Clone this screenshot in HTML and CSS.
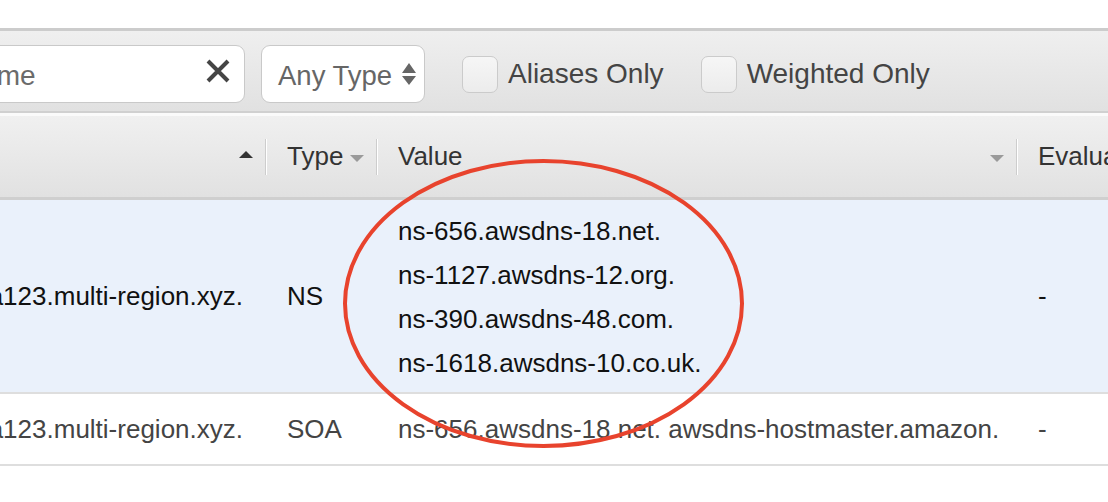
FILE: index.html
```html
<!DOCTYPE html>
<html lang="en">
<head>
<meta charset="utf-8">
<title>Record Sets</title>
<link rel="stylesheet" href="styles.css">
</head>
<body>
<div class="viewport">
  <div class="page">
    <div class="topbar"></div>
    <div class="toolbar">
      <div class="search">
        <span class="ph">Record Set Name</span>
        <svg class="clear" viewBox="0 0 28 28" aria-hidden="true"><path d="M4 4 L24 24 M24 4 L4 24" stroke="#454545" stroke-width="4" fill="none"/></svg>
      </div>
      <div class="select">
        <span>Any Type</span>
        <svg class="updown" viewBox="0 0 14 24" aria-hidden="true"><path d="M0 11 L7 1 L14 11 Z M0 14 L14 14 L7 23 Z" fill="#666"/></svg>
      </div>
      <label class="check"><span class="box"></span><span>Aliases Only</span></label>
      <label class="check"><span class="box"></span><span>Weighted Only</span></label>
    </div>
    <div class="table">
      <div class="thead">
        <div class="th"><div class="th-in first"><span>Name</span><i class="caret up"></i></div></div>
        <div class="th"><div class="th-in"><span>Type</span><i class="caret down"></i></div></div>
        <div class="th"><div class="th-in"><span>Value</span><i class="caret down"></i></div></div>
        <div class="th"><div class="th-in"><span>Evaluate Target Health</span></div></div>
      </div>
      <div class="row sel">
        <div class="cell name">a123.multi-region.xyz.</div>
        <div class="cell">NS</div>
        <div class="cell value">
          <div>ns-656.awsdns-18.net.</div>
          <div>ns-1127.awsdns-12.org.</div>
          <div>ns-390.awsdns-48.com.</div>
          <div>ns-1618.awsdns-10.co.uk.</div>
        </div>
        <div class="cell">-</div>
      </div>
      <div class="row">
        <div class="cell name">a123.multi-region.xyz.</div>
        <div class="cell">SOA</div>
        <div class="cell">ns-656.awsdns-18.net. awsdns-hostmaster.amazon.</div>
        <div class="cell">-</div>
      </div>
    </div>
  </div>
  <svg class="circle" viewBox="0 0 410 298" aria-hidden="true"><ellipse cx="204.5" cy="148.5" rx="198.5" ry="142.5" fill="none" stroke="#e8432d" stroke-width="4"/></svg>
</div>
</body>
</html>
```

FILE: styles.css
```css
html, body {
  margin: 0;
  padding: 0;
  background: #fff;
}

body {
  font-family: "Liberation Sans", Arial, Helvetica, sans-serif;
  overflow: hidden;
}

.viewport {
  position: relative;
  width: 1108px;
  height: 502px;
  overflow: hidden;
}

.page {
  margin-left: -216px;
  width: 1324px;
}

.topbar {
  height: 28px;
  border-bottom: 3px solid #cccccc;
}

.toolbar {
  display: flex;
  align-items: center;
  padding: 14px 0 8px 14px;
  background: linear-gradient(#efefef, #e1e1e1);
  border-bottom: 2px solid #d0d0d0;
}

.search {
  box-sizing: border-box;
  width: 447px;
  height: 58px;
  display: flex;
  align-items: center;
  padding: 3px 12px 0 14px;
  background: #fff;
  border: 1px solid #c9c9c9;
  border-radius: 9px;
  font-size: 28px;
  color: #6b6b6b;
}

.search .ph {
  flex: 1;
  white-space: nowrap;
}

.clear {
  width: 28px;
  height: 28px;
  align-self: flex-start;
  margin-top: 8px;
}

.select {
  box-sizing: border-box;
  margin-left: 16px;
  width: 164px;
  height: 58px;
  display: flex;
  align-items: center;
  justify-content: space-between;
  padding: 3px 8px 0 16px;
  background: #fff;
  border: 1px solid #c9c9c9;
  border-radius: 9px;
  font-size: 27.5px;
  color: #666;
}

.updown {
  width: 14px;
  height: 24px;
  margin-top: -3px;
}

.check {
  display: flex;
  align-items: center;
  gap: 10px;
  margin-left: 37px;
  font-size: 28px;
  color: #444;
}

.check .box {
  box-sizing: border-box;
  width: 36px;
  height: 37px;
  border: 1px solid #cbcbcb;
  border-radius: 7px;
  background: linear-gradient(#f6f6f6, #ececec);
}

.thead,
.row {
  display: grid;
  grid-template-columns: 481px 111px 640px 1fr;
}

.thead {
  height: 81px;
  border-top: 3px solid #fafafa;
  border-bottom: 3px solid #cfcfcf;
  background: linear-gradient(#f0f0f0, #e1e1e1);
}

.th {
  display: flex;
  align-items: center;
  min-width: 0;
}

.th-in {
  flex: 1;
  height: 36px;
  display: flex;
  align-items: center;
  justify-content: space-between;
  padding: 0 12px 0 21px;
  border-left: 1px solid #cdcdcd;
  box-shadow: inset 1px 0 0 #ffffff;
  font-size: 26px;
  color: #333;
  white-space: nowrap;
}

.th-in.first {
  border-left: 0;
  box-shadow: none;
  padding-left: 22px;
}

.caret {
  width: 0;
  height: 0;
  border-left: 7.5px solid transparent;
  border-right: 7.5px solid transparent;
}

.caret.up {
  border-bottom: 7px solid #333;
  margin-top: -4px;
}

.caret.down {
  border-top: 7px solid #9a9a9a;
  margin-top: 4px;
}

.row {
  height: 70px;
  border-bottom: 2px solid #dedede;
  font-size: 26px;
  color: #444;
}

.row.sel {
  height: 192px;
  background: #eaf1fb;
  color: #111;
}

.cell {
  display: flex;
  align-items: center;
  padding: 0 22px;
  white-space: nowrap;
  min-width: 0;
}

.cell.name {
  justify-content: flex-end;
}

.cell.value {
  flex-direction: column;
  align-items: flex-start;
  justify-content: flex-start;
  padding-top: 9px;
  line-height: 44px;
}

.circle {
  position: absolute;
  left: 339px;
  top: 155px;
  width: 410px;
  height: 298px;
}
```
